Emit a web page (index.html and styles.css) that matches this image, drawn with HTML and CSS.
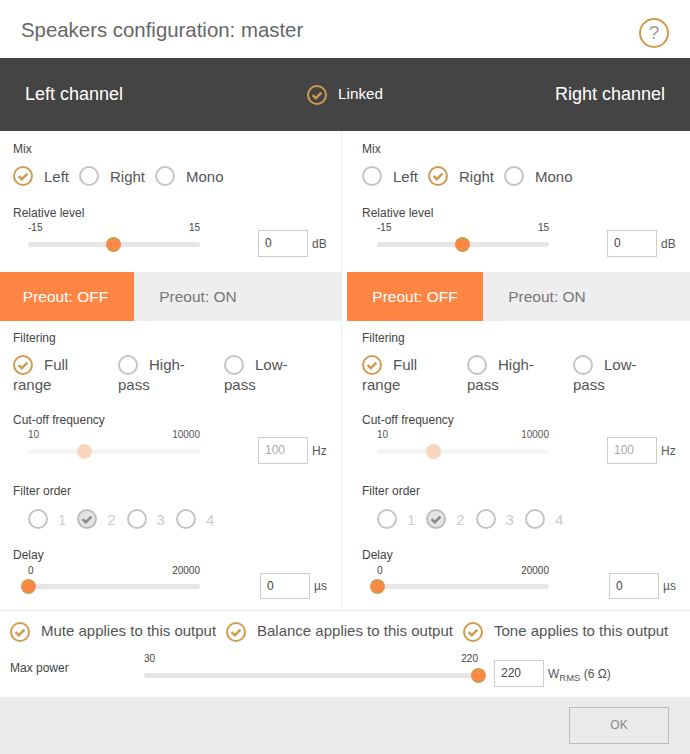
FILE: index.html
```html
<!DOCTYPE html>
<html lang="en">
<head>
<meta charset="utf-8">
<title>Speakers configuration</title>
<link rel="stylesheet" href="styles.css">
</head>
<body>
<div class="dialog">
  <header class="titlebar">
    <h1 class="title">Speakers configuration: master</h1>
    <div class="help">?</div>
  </header>
  <div class="bandeau">
    <div class="band-title">Left channel</div>
    <div class="linked"><span class="radio on"><svg viewBox="0 0 20 20"><path d="M5.6 10.2l3.2 3 5.6-5.6"/></svg></span><span class="linked-text">Linked</span></div>
    <div class="band-title">Right channel</div>
  </div>
  <div class="channels">
    <section class="channel left">
      <div class="label mix-label">Mix</div>
      <div class="radios mix">
        <div class="opt"><span class="radio on"><svg viewBox="0 0 20 20"><path d="M5.6 10.2l3.2 3 5.6-5.6"/></svg></span>Left</div>
        <div class="opt"><span class="radio"></span>Right</div>
        <div class="opt"><span class="radio"></span>Mono</div>
      </div>
      <div class="label rel-label">Relative level</div>
      <div class="slider-row">
        <div class="slider"><div class="ends"><span>-15</span><span>15</span></div><div class="track"><span class="thumb t50"></span></div></div>
        <div class="value"><span class="input">0</span><span class="unit">dB</span></div>
      </div>
      <div class="preout"><div class="tab active">Preout: OFF</div><div class="tab">Preout: ON</div></div>
      <div class="label filt-label">Filtering</div>
      <div class="filters">
        <div class="fopt"><span class="radio on"><svg viewBox="0 0 20 20"><path d="M5.6 10.2l3.2 3 5.6-5.6"/></svg></span>Full<br>range</div>
        <div class="fopt"><span class="radio"></span>High-<br>pass</div>
        <div class="fopt"><span class="radio"></span>Low-<br>pass</div>
      </div>
      <div class="label cut-label">Cut-off frequency</div>
      <div class="slider-row dim">
        <div class="slider"><div class="ends"><span>10</span><span>10000</span></div><div class="track"><span class="thumb t33"></span></div></div>
        <div class="value"><span class="input">100</span><span class="unit">Hz</span></div>
      </div>
      <div class="label order-label">Filter order</div>
      <div class="radios order">
        <div class="opt"><span class="radio"></span>1</div>
        <div class="opt"><span class="radio grey"><svg viewBox="0 0 20 20"><path d="M5.6 10.2l3.2 3 5.6-5.6"/></svg></span>2</div>
        <div class="opt"><span class="radio"></span>3</div>
        <div class="opt"><span class="radio"></span>4</div>
      </div>
      <div class="label delay-label">Delay</div>
      <div class="slider-row delay">
        <div class="slider"><div class="ends"><span>0</span><span>20000</span></div><div class="track"><span class="thumb t0"></span></div></div>
        <div class="value"><span class="input">0</span><span class="unit">µs</span></div>
      </div>
    </section>
    <section class="channel right">
      <div class="label mix-label">Mix</div>
      <div class="radios mix">
        <div class="opt"><span class="radio"></span>Left</div>
        <div class="opt"><span class="radio on"><svg viewBox="0 0 20 20"><path d="M5.6 10.2l3.2 3 5.6-5.6"/></svg></span>Right</div>
        <div class="opt"><span class="radio"></span>Mono</div>
      </div>
      <div class="label rel-label">Relative level</div>
      <div class="slider-row">
        <div class="slider"><div class="ends"><span>-15</span><span>15</span></div><div class="track"><span class="thumb t50"></span></div></div>
        <div class="value"><span class="input">0</span><span class="unit">dB</span></div>
      </div>
      <div class="preout"><div class="tab active">Preout: OFF</div><div class="tab">Preout: ON</div></div>
      <div class="label filt-label">Filtering</div>
      <div class="filters">
        <div class="fopt"><span class="radio on"><svg viewBox="0 0 20 20"><path d="M5.6 10.2l3.2 3 5.6-5.6"/></svg></span>Full<br>range</div>
        <div class="fopt"><span class="radio"></span>High-<br>pass</div>
        <div class="fopt"><span class="radio"></span>Low-<br>pass</div>
      </div>
      <div class="label cut-label">Cut-off frequency</div>
      <div class="slider-row dim">
        <div class="slider"><div class="ends"><span>10</span><span>10000</span></div><div class="track"><span class="thumb t33"></span></div></div>
        <div class="value"><span class="input">100</span><span class="unit">Hz</span></div>
      </div>
      <div class="label order-label">Filter order</div>
      <div class="radios order">
        <div class="opt"><span class="radio"></span>1</div>
        <div class="opt"><span class="radio grey"><svg viewBox="0 0 20 20"><path d="M5.6 10.2l3.2 3 5.6-5.6"/></svg></span>2</div>
        <div class="opt"><span class="radio"></span>3</div>
        <div class="opt"><span class="radio"></span>4</div>
      </div>
      <div class="label delay-label">Delay</div>
      <div class="slider-row delay">
        <div class="slider"><div class="ends"><span>0</span><span>20000</span></div><div class="track"><span class="thumb t0"></span></div></div>
        <div class="value"><span class="input">0</span><span class="unit">µs</span></div>
      </div>
    </section>
  </div>
  <div class="applies">
    <div class="opt"><span class="radio on"><svg viewBox="0 0 20 20"><path d="M5.6 10.2l3.2 3 5.6-5.6"/></svg></span>Mute applies to this output</div>
    <div class="opt"><span class="radio on"><svg viewBox="0 0 20 20"><path d="M5.6 10.2l3.2 3 5.6-5.6"/></svg></span>Balance applies to this output</div>
    <div class="opt"><span class="radio on"><svg viewBox="0 0 20 20"><path d="M5.6 10.2l3.2 3 5.6-5.6"/></svg></span>Tone applies to this output</div>
  </div>
  <div class="power">
    <div class="label power-label">Max power</div>
    <div class="slider"><div class="ends"><span>30</span><span>220</span></div><div class="track"><span class="thumb t100"></span></div></div>
    <div class="value"><span class="input">220</span><span class="unit">W<sub>RMS</sub> (6 Ω)</span></div>
  </div>
  <footer class="footer"><div class="ok">OK</div></footer>
</div>
</body>
</html>
```
FILE: styles.css
```css
* { box-sizing: border-box; }
html, body { margin: 0; padding: 0; }
body { font-family: "Liberation Sans", Arial, sans-serif; color: #444; background: #fff; }
.dialog { width: 690px; height: 754px; display: flex; flex-direction: column; overflow: hidden; }

.titlebar { height: 58px; display: flex; justify-content: space-between; align-items: center; padding: 2px 21px 0 21px; }
.title { margin: 0; font-size: 20.4px; font-weight: 400; color: #666; }
.help { width: 30px; height: 30px; margin-top: 6px; border: 2px solid #cf9c4f; border-radius: 50%; color: #999; font-size: 19px; line-height: 26px; text-align: center; }

.bandeau { height: 73px; background: #444; color: #fff; display: flex; justify-content: space-between; align-items: center; padding: 0 25px; }
.band-title { font-size: 18px; }
.linked { display: flex; align-items: center; gap: 11px; font-size: 15.2px; margin-left: 12px; }
.linked-text { margin-bottom: 3px; }

.channels { display: flex; height: 479px; }
.channel { flex: none; }
.channel.left { width: 342px; margin-right: 5px; border-right: 1px solid #eee; margin-bottom: 2px; }
.channel.right { width: 343px; }

.label { font-size: 12px; color: #444; line-height: 14px; margin-left: 13px; }
.channel.right .label { margin-left: 15px; }
.mix-label { margin-top: 11px; }
.radios { display: flex; margin-left: 13px; }
.channel.right .radios { margin-left: 15px; }
.opt { display: flex; align-items: center; font-size: 15px; color: #555; }
.radio { flex: none; display: inline-block; width: 20px; height: 20px; border: 2px solid #c4c4c4; border-radius: 50%; background: #fff; position: relative; }
.radio svg { display: block; position: absolute; left: -2px; top: -2px; width: 20px; height: 20px; fill: none; stroke-width: 2.5; }
.radio.on { border-color: #cf9c4f; background: transparent; }
.radio.on svg { stroke: #cf9c4f; }
.radio.grey { background: #e4e4e4; border-color: #bdbdbd; }
.radio.grey svg { stroke: #888; }

.mix { margin-top: 10px; height: 20px; }
.mix .opt .radio { margin-right: 11px; }
.mix .opt:nth-child(1) { width: 66px; }
.mix .opt:nth-child(2) { width: 76px; }

.rel-label { margin-top: 20px; }

.slider-row { display: flex; align-items: flex-end; margin-left: 28px; width: 298px; justify-content: space-between; }
.channel.right .slider-row { margin-left: 30px; }
.slider { width: 172px; margin-top: 2px; }
.ends { display: flex; justify-content: space-between; font-size: 10px; line-height: 12px; color: #444; }
.track { position: relative; height: 5px; margin-top: 8px; margin-bottom: 10px; border-radius: 3px; background: #e6e6e6; }
.thumb { position: absolute; top: -5px; width: 15px; height: 15px; margin-left: -7.5px; border-radius: 50%; background: #fb8744; border-top: 2px solid #c2a04c; border-bottom: 2px solid #c2a04c; }
.t50 { left: 49.5%; }
.t33 { left: 33%; }
.t0 { left: 0; }
.t100 { left: 100%; }

.value { display: flex; align-items: center; }
.input { display: block; width: 50px; height: 27px; padding: 0 6px; border: 1px solid #ccc; font-size: 12px; line-height: 25px; color: #444; background: #fff; }
.unit { margin-left: 4px; font-size: 12px; color: #555; width: 14px; white-space: nowrap; }
.unit sub { font-size: 9.5px; vertical-align: -3px; line-height: 0; }

.preout { display: flex; height: 49px; margin-top: 15px; background: #eee; }
.tab { display: flex; align-items: center; justify-content: center; width: 128px; font-size: 15.5px; color: #777; }
.tab.active { width: 134px; background: #fe8543; color: #fff; }
.channel.left .tab.active { padding-right: 3px; }
.channel.right .tab.active { width: 136px; }

.filt-label { margin-top: 10px; }
.filters { display: flex; margin: 10px 0 0 13px; font-size: 15px; line-height: 20px; color: #555; height: 40px; }
.channel.right .filters { margin-left: 15px; }
.fopt { width: 105px; }
.fopt:nth-child(2) { width: 106px; }
.fopt .radio { vertical-align: top; margin-right: 11px; }

.cut-label { margin-top: 18px; }
.dim .ends { color: #555; }
.dim .track { background: #f5f5f5; }
.dim .thumb { background: #f7d6bd; border: 0; }
.dim .input { color: #aaa; }

.order-label { margin-top: 20px; }
.order { margin-top: 11px; margin-left: 28px; }
.channel.right .order { margin-left: 30px; }
.order .opt { color: #ccc; width: 49.3px; font-size: 15px; }
.order .radio { margin-right: 10px; }

.delay-label { margin-top: 19px; }
.delay .slider { margin-top: 3px; }
.delay .track { margin-top: 7px; }
.delay .input { height: 26px; line-height: 24px; }
.delay .unit { width: 12px; }

.applies { display: flex; height: 43px; border-top: 1px solid #e6e6e6; padding: 0 0 3px 10px; align-items: center; }
.applies .opt { font-size: 15px; }
.applies .radio { margin-right: 11px; margin-top: 3px; }
.applies .opt:nth-child(1) { width: 216px; }
.applies .opt:nth-child(2) { width: 237px; }

.power { display: flex; height: 44px; align-items: flex-start; }
.power-label { margin: 8px 0 0 10px; width: 134px; }
.power .slider { width: 334px; margin-top: 0; }
.power .value { margin-left: 16px; margin-top: 7px; }
.power .unit { width: auto; }

.footer { flex: 1; background: #ebebeb; display: flex; justify-content: flex-end; align-items: flex-start; padding: 10px 21px 0 0; }
.ok { width: 100px; height: 37px; border: 1px solid #bbb; text-align: center; line-height: 35px; font-size: 12px; color: #888; }
```
